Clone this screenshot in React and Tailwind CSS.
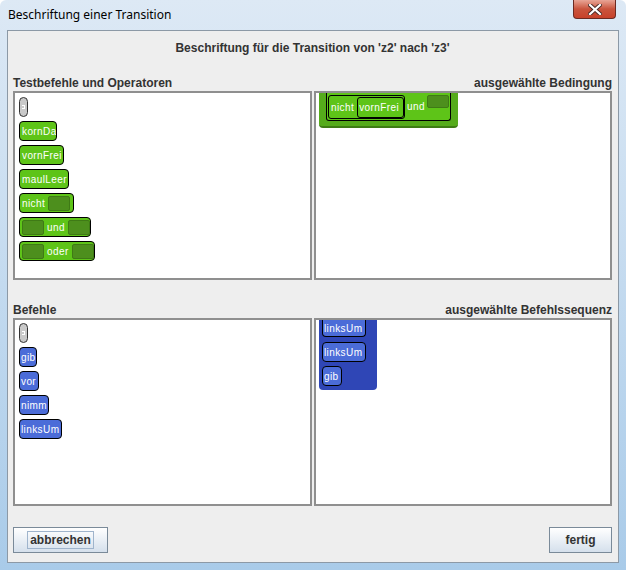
import React from "react";

const F = { fontFamily: '"Liberation Sans", Arial, sans-serif' };

function G({ w, children, className = "" }) {
  return (
    <div
      className={`h-[20px] rounded-[4px] border border-black bg-[#5ec418] text-white text-[10px] tracking-[0.4px] flex items-center px-[2px] shrink-0 whitespace-nowrap overflow-hidden ${className}`}
      style={{ width: w }}
    >
      {children}
    </div>
  );
}

function Slot() {
  return <div className="w-[22px] h-[15px] rounded-[2px] border border-[#3f7a16] bg-[#4d8f1d] shrink-0" />;
}

function B({ w, children, className = "" }) {
  return (
    <div
      className={`h-[20px] rounded-[4px] border border-black bg-[#4b6cd8] text-white text-[10px] tracking-[0.4px] flex items-center px-[1px] shrink-0 overflow-hidden whitespace-nowrap ${className}`}
      style={{ width: w }}
    >
      {children}
    </div>
  );
}

function Pill() {
  return (
    <div className="w-[9px] h-[20px] rounded-full border border-[#333] bg-[#c9c9c9] flex items-center justify-center">
      <div className="w-[3px] h-[4px] border border-white border-l-0" />
    </div>
  );
}

function Panel({ children, className = "" }) {
  return (
    <div className={`bg-white border-2 border-[#8f8f8f] overflow-hidden ${className}`}>{children}</div>
  );
}

export default function App() {
  return (
    <div
      className="w-[626px] h-[570px] flex flex-col bg-gradient-to-b from-[#dde9f5] to-[#a9cbe9] rounded-t-[6px] overflow-hidden"
      style={F}
    >
      {/* Title bar */}
      <div className="h-[30px] flex items-start justify-between pl-[8px] pr-[10px] shrink-0">
        <div className="text-[12px] text-black pt-[6px]" style={{ fontFamily: '"Noto Sans", "Liberation Sans", sans-serif' }}>
          Beschriftung einer Transition
        </div>
        <div className="w-[43px] h-[19px] rounded-b-[4px] border border-[#6b2a22] border-t-0 bg-gradient-to-b from-[#e8a596] via-[#c9543d] to-[#c7412a] flex items-center justify-center">
          <svg width="14" height="11" viewBox="0 0 14 11">
            <path d="M2 1 L12 10 M12 1 L2 10" stroke="#4a2a26" strokeWidth="4" strokeLinecap="square" />
            <path d="M2 1 L12 10 M12 1 L2 10" stroke="#ffffff" strokeWidth="2.2" strokeLinecap="square" />
          </svg>
        </div>
      </div>

      {/* Content */}
      <div className="flex-1 mx-[7px] mb-[7px] border border-[#8c99a6] bg-[#eeeeee] flex flex-col pl-[5px] pr-[6px]">
        <div className="h-[34px] flex items-center justify-center text-[12px] font-bold text-[#333]">
          Beschriftung für die Transition von 'z2' nach 'z3'
        </div>

        <div className="h-[26px] flex items-end justify-between text-[12px] font-bold text-[#333] leading-[16px]">
          <span>Testbefehle und Operatoren</span>
          <span>ausgewählte Bedingung</span>
        </div>

        <div className="h-[189px] grid grid-cols-[299px_298px] gap-[2px]">
          <Panel>
            <div className="flex flex-col items-start gap-[4px] pl-[4px] pt-[4px]">
              <Pill />
              <G w={38}>kornDa</G>
              <G w={45}>vornFrei</G>
              <G w={50}>maulLeer</G>
              <G w={55}>
                <span className="mr-[3px]">nicht</span>
                <Slot />
              </G>
              <G w={72} className="gap-[3px] px-[1px]">
                <Slot />
                <span>und</span>
                <Slot />
              </G>
              <G w={76} className="gap-[3px] px-[1px]">
                <Slot />
                <span>oder</span>
                <Slot />
              </G>
            </div>
          </Panel>
          <Panel>
            <div className="ml-[3px] w-[139px] h-[35px] bg-[#55ab1b] rounded-b-[4px] border-b-2 border-[#3e7c14] pl-[7px]">
              <div className="w-[125px] h-[28px] bg-[#5ec418] border border-t-0 border-black rounded-b-[3px] flex items-start pl-[1px] pt-[2px] gap-[2px]">
                <div className="h-[24px] w-[77px] border border-black rounded-[3px] flex items-center pl-[2px] gap-[3px] text-white text-[10px] tracking-[0.4px]">
                  <span>nicht</span>
                  <div className="h-[21px] w-[47px] border border-black rounded-[3px] flex items-center px-[1px] whitespace-nowrap overflow-hidden">vornFrei</div>
                </div>
                <span className="text-white text-[10px] tracking-[0.4px] pt-[4px]">und</span>
                <div className="w-[22px] h-[13px] rounded-[2px] border border-[#3f7a16] bg-[#4d8f1d]" />
              </div>
            </div>
          </Panel>
        </div>

        <div className="h-[38px] flex items-end justify-between text-[12px] font-bold text-[#333] leading-[16px]">
          <span>Befehle</span>
          <span>ausgewählte Befehlssequenz</span>
        </div>

        <div className="h-[188px] grid grid-cols-[299px_298px] gap-[2px]">
          <Panel>
            <div className="flex flex-col items-start gap-[4px] pl-[4px] pt-[3px]">
              <Pill />
              <B w={18}>gib</B>
              <B w={20}>vor</B>
              <B w={30}>nimm</B>
              <B w={43}>linksUm</B>
            </div>
          </Panel>
          <Panel>
            <div className="ml-[3px] w-[58px] h-[70px] bg-[#2f46b6] rounded-b-[4px] pl-[3px] flex flex-col items-start">
              <div className="h-[17px] w-[44px] rounded-b-[4px] border border-t-0 border-black bg-[#4b6cd8] text-white text-[10px] tracking-[0.4px] flex items-center px-[1px] whitespace-nowrap overflow-hidden">
                linksUm
              </div>
              <B w={44} className="mt-[5px]">linksUm</B>
              <B w={20} className="mt-[4px]">gib</B>
            </div>
          </Panel>
        </div>

        <div className="flex justify-between mt-[21px]">
          <button className="w-[95px] h-[26px] border border-[#7a8a99] bg-gradient-to-b from-white to-[#d5e0ec] flex items-center justify-center text-[12px] font-bold text-[#333]">
            <span className="border border-[#9fb4cc] px-[2px] leading-[16px]">abbrechen</span>
          </button>
          <button className="w-[63px] h-[26px] border border-[#7a8a99] bg-gradient-to-b from-white to-[#d5e0ec] flex items-center justify-center text-[12px] font-bold text-[#333]">
            fertig
          </button>
        </div>
      </div>
    </div>
  );
}
